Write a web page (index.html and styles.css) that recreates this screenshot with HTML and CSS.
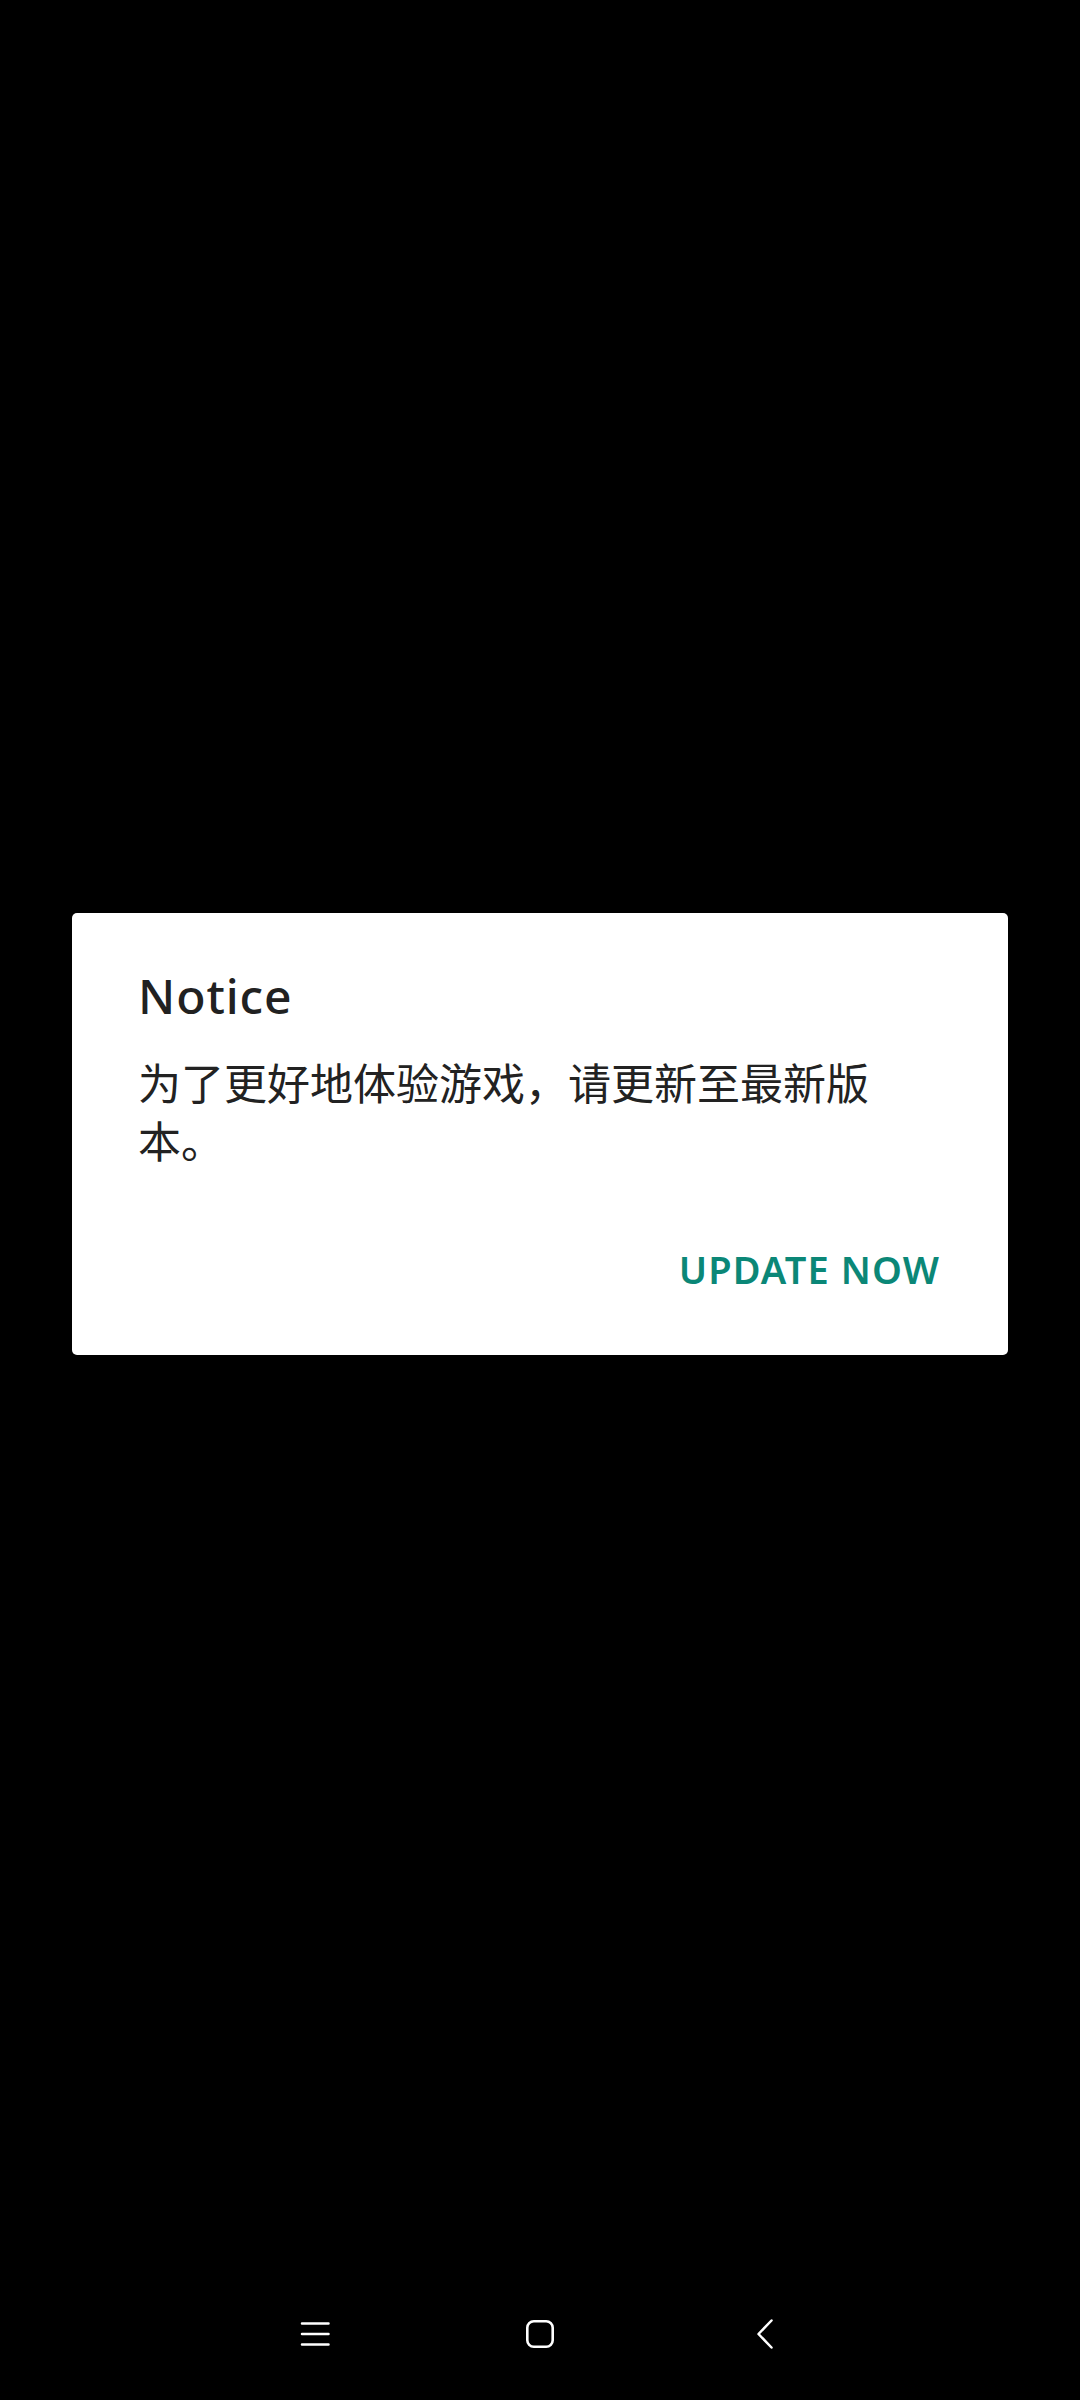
FILE: index.html
```html
<!DOCTYPE html>
<html lang="zh-CN">
<head>
<meta charset="utf-8">
<title>Notice</title>
<link rel="stylesheet" href="styles.css">
</head>
<body>
<div class="screen">
  <main class="stage">
    <section class="dialog" role="dialog" aria-labelledby="dlg-title">
      <h1 class="dialog-title" id="dlg-title">Notice</h1>
      <p class="dialog-message">为了更好地体验游戏，请更新至最新版本。</p>
      <div class="dialog-actions">
        <button class="dialog-button" type="button">UPDATE NOW</button>
      </div>
    </section>
  </main>
  <nav class="navbar">
    <div class="nav-slot">
      <svg class="nav-icon" width="32" height="32" viewBox="0 0 32 32" aria-hidden="true">
        <path d="M3 5.5h26.5M3 16h26.5M3 26.5h26.5" fill="none" stroke="#fff" stroke-width="2.5" stroke-linecap="round"/>
      </svg>
    </div>
    <div class="nav-slot">
      <svg class="nav-icon" width="32" height="32" viewBox="0 0 32 32" aria-hidden="true">
        <rect x="3.3" y="3.3" width="25.4" height="25.4" rx="6.5" ry="6.5" fill="none" stroke="#fff" stroke-width="2.6"/>
      </svg>
    </div>
    <div class="nav-slot">
      <svg class="nav-icon" width="32" height="32" viewBox="0 0 32 32" aria-hidden="true">
        <path d="M22.5 2.5L9.5 16l13 13.5" fill="none" stroke="#fff" stroke-width="2.5" stroke-linecap="round" stroke-linejoin="round"/>
      </svg>
    </div>
  </nav>
</div>
</body>
</html>
```

FILE: styles.css
```css
* {
  box-sizing: border-box;
}

html,
body {
  margin: 0;
  padding: 0;
  background: #000;
}

.screen {
  width: 1080px;
  height: 2400px;
  display: flex;
  flex-direction: column;
  background: #000;
}

.stage {
  flex: 1;
  display: flex;
  align-items: center;
  justify-content: center;
  padding: 0 72px;
}

.dialog {
  width: 936px;
  background: #ffffff;
  border-radius: 5px;
  padding: 54px 70px 64px 66px;
  display: flex;
  flex-direction: column;
}

.dialog-title {
  margin: 0;
  font-family: "Noto Sans", Roboto, sans-serif;
  font-weight: 500;
  font-size: 48px;
  line-height: 58px;
  letter-spacing: 0.9px;
  color: #212121;
}

.dialog-message {
  margin: 27px 0 0;
  width: 804px;
  font-family: "Noto Sans CJK SC", "Noto Sans", sans-serif;
  font-weight: 400;
  font-size: 43px;
  line-height: 58px;
  color: #222222;
}

.dialog-actions {
  margin-top: 79px;
  display: flex;
  justify-content: flex-end;
}

.dialog-button {
  margin: 0;
  padding: 0;
  border: 0;
  background: transparent;
  font-family: "Noto Sans", Roboto, sans-serif;
  font-weight: 600;
  font-size: 38px;
  line-height: 44px;
  letter-spacing: 1.1px;
  margin-right: -2px;
  color: #0b8777;
  cursor: pointer;
}

.navbar {
  height: 132px;
  flex: none;
  display: grid;
  grid-template-columns: repeat(3, 225px);
  justify-content: center;
  align-items: center;
}

.nav-slot {
  display: flex;
  align-items: center;
  justify-content: center;
  height: 100%;
}

.nav-icon {
  display: block;
}
```
